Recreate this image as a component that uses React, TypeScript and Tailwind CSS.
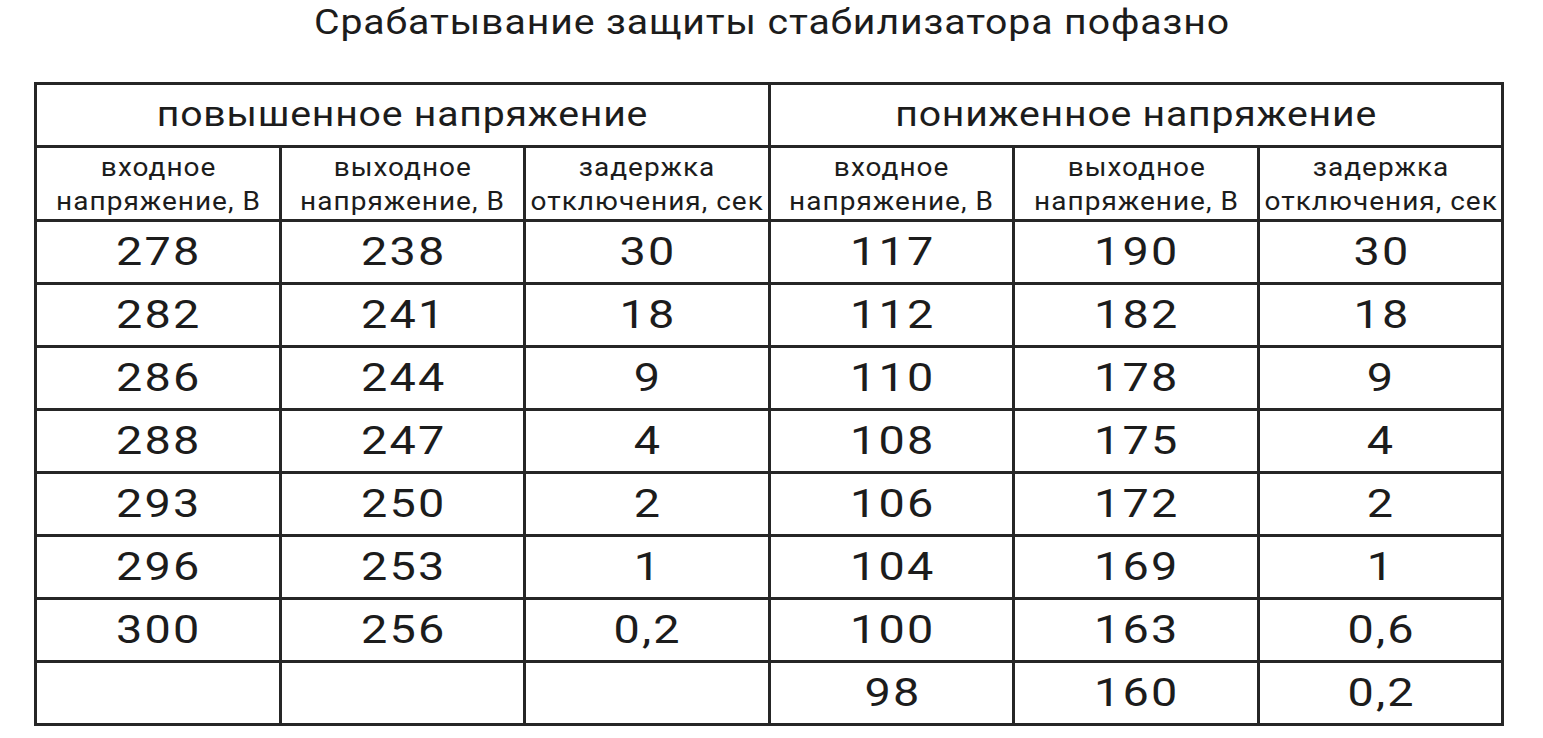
const high = [
  ["278", "238", "30"],
  ["282", "241", "18"],
  ["286", "244", "9"],
  ["288", "247", "4"],
  ["293", "250", "2"],
  ["296", "253", "1"],
  ["300", "256", "0,2"],
  ["", "", ""],
];

const low = [
  ["117", "190", "30"],
  ["112", "182", "18"],
  ["110", "178", "9"],
  ["108", "175", "4"],
  ["106", "172", "2"],
  ["104", "169", "1"],
  ["100", "163", "0,6"],
  ["98", "160", "0,2"],
];

const sub = [
  ["входное", "напряжение, В"],
  ["выходное", "напряжение, В"],
  ["задержка", "отключения, сек"],
];

export default function App() {
  return (
    <div
      className="w-[1543px] h-[738px] bg-white text-[#1c1c1c] overflow-hidden"
      style={{ fontFamily: "Roboto, 'Liberation Sans', sans-serif" }}
    >
      <div className="h-[82px] pt-[3px] text-center text-[35px] leading-[40px]">
        <span className="inline-block scale-x-[1.12] tracking-[0.8px] pl-[1px]">
          Срабатывание защиты стабилизатора пофазно
        </span>
      </div>

      <div className="ml-[34px] w-[1470px] grid grid-cols-6 gap-[3px] p-[3px] bg-[#262626]">
        <div className="col-span-3 h-[60px] bg-white flex items-center justify-center text-[35px]">
          <span className="inline-block scale-x-[1.12] tracking-[0.7px] pl-[1px]">повышенное напряжение</span>
        </div>
        <div className="col-span-3 h-[60px] bg-white flex items-center justify-center text-[35px]">
          <span className="inline-block scale-x-[1.12] tracking-[0.7px] pl-[1px]">пониженное напряжение</span>
        </div>

        {[...sub, ...sub].map((s, i) => (
          <div
            key={i}
            className="h-[71px] bg-white flex flex-col items-center justify-center text-[25px] leading-[34px] pt-[2px] whitespace-nowrap"
          >
            <span className="inline-block scale-x-[1.12] tracking-[0.9px] pl-[1px]">{s[0]}</span>
            <span className="inline-block scale-x-[1.12] tracking-[0.9px] pl-[1px]">{s[1]}</span>
          </div>
        ))}

        {high.map((row, r) =>
          [...row, ...low[r]].map((v, c) => (
            <div
              key={`${r}-${c}`}
              className="h-[60px] bg-white flex items-center justify-center text-[39px]"
            >
              <span className="inline-block scale-x-[1.2] tracking-[1.8px] pl-[2px]">{v}</span>
            </div>
          ))
        )}
      </div>
    </div>
  );
}
